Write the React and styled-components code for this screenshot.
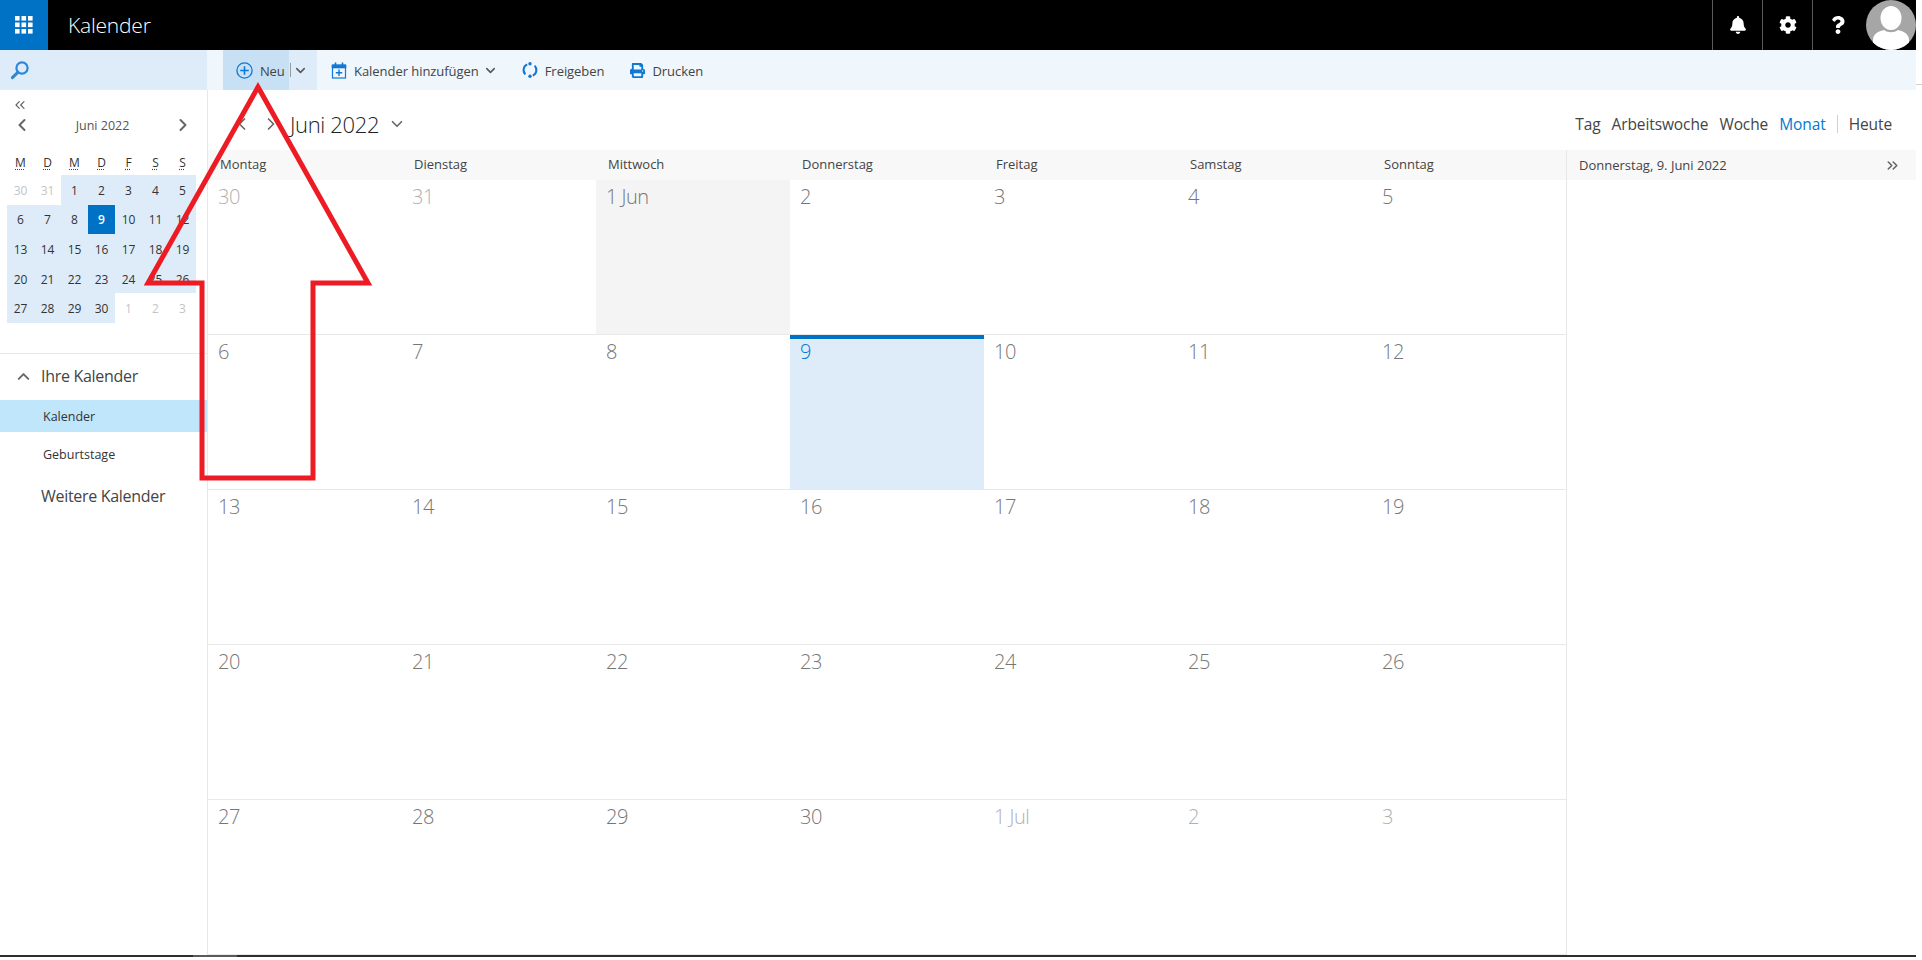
import React from 'react';
import styled, { createGlobalStyle } from 'styled-components';
import { ChevronDown, ChevronLeft, ChevronRight, ChevronUp, ChevronsLeft, ChevronsRight } from 'lucide-react';
import { FaBell, FaCog, FaQuestion, FaPrint } from 'react-icons/fa';

const GlobalStyle = createGlobalStyle`
  html, body {
    margin: 0;
    padding: 0;
    background: #ffffff;
    font-family: "Open Sans", "Noto Sans", sans-serif;
    color: #333333;
  }
  * { box-sizing: border-box; }
`;

const Page = styled.div`
  position: relative;
  width: 1916px;
  height: 957px;
  display: flex;
  flex-direction: column;
`;

const TopBar = styled.header`
  display: flex;
  align-items: stretch;
  height: 50px;
  background: #000000;
  color: #ffffff;
`;

const Waffle = styled.div`
  width: 48px;
  display: flex;
  align-items: center;
  justify-content: center;
  background: #0072c6;
`;

const AppTitle = styled.div`
  flex: 1;
  padding-left: 20px;
  font-size: 21px;
  font-weight: 300;
  line-height: 50px;
  letter-spacing: -0.2px;
`;

const TopIcon = styled.div`
  width: 50px;
  display: flex;
  align-items: center;
  justify-content: center;
  border-left: 1px solid #5a5a5a;
  font-size: 18px;
`;

const Avatar = styled.div`
  width: 50px;
  height: 50px;
  margin-left: 4px;
  border-radius: 50%;
  overflow: hidden;
  background: #a6a6a6;
`;

const Toolbar = styled.div`
  position: relative;
  display: flex;
  height: 40px;
  background: #eff6fc;
  &::after {
    content: '';
    position: absolute;
    left: 100%;
    top: 34px;
    width: 6px;
    height: 1px;
    background: #cfcfcf;
  }
`;

const SearchBox = styled.div`
  width: 207px;
  display: flex;
  align-items: center;
  padding-left: 10px;
  background: #deecf9;
`;

const Actions = styled.div`
  display: flex;
  align-items: stretch;
  margin-left: 16px;
`;

const NewButton = styled.div`
  width: 66px;
  display: flex;
  align-items: center;
  gap: 7px;
  padding: 1px 0 0 13px;
  background: #c7e0f4;
  font-size: 13px;
  letter-spacing: -0.2px;
  color: #444444;
  & > svg { margin-top: -1px; }
`;

const NewMore = styled.div`
  width: 28px;
  display: flex;
  align-items: center;
  justify-content: flex-start;
  padding-left: 1px;
  background: #deecf9;
  color: #555555;
  & > i {
    width: 1px;
    height: 14px;
    margin-right: 2px;
    background: #9a9a9a;
  }
`;

const ActionButton = styled.div`
  display: flex;
  align-items: center;
  gap: 7px;
  padding: 1px ${(p) => p.$right}px 0 14px;
  font-size: 13px;
  letter-spacing: -0.05px;
  color: #444444;
  & > svg { margin-top: -1px; }
`;

const ActionCaret = styled(ChevronDown)`
  margin-left: -3px;
  color: #555555;
`;

const Body = styled.div`
  flex: 1;
  display: flex;
  min-height: 0;
`;

const Sidebar = styled.aside`
  width: 208px;
  border-right: 1px solid #e8e8e8;
  display: flex;
  flex-direction: column;
`;

const CollapseRow = styled.div`
  height: 26px;
  padding: 6px 0 0 12px;
  color: #666666;
`;

const MiniNav = styled.div`
  height: 18px;
  display: flex;
  align-items: center;
  justify-content: space-between;
  padding: 0 14px 0 12px;
  font-size: 12.5px;
  color: #555555;
`;

const NavArrow = styled.span`
  display: flex;
  color: #666666;
`;

const MiniGrid = styled.div`
  display: grid;
  grid-template-columns: repeat(7, 27px);
  margin: 16px 0 0 7px;
`;

const MiniHead = styled.div`
  height: 25px;
  display: flex;
  align-items: center;
  justify-content: center;
  font-size: 12px;
  color: #333333;
  & > abbr {
    text-decoration: underline dotted #444444;
    text-underline-offset: 2px;
  }
`;

const MiniDay = styled.div`
  height: 29.6px;
  padding-top: 1px;
  display: flex;
  align-items: center;
  justify-content: center;
  font-size: 12px;
  color: ${(p) => (p.$today ? '#ffffff' : p.$outside ? '#c4c4c4' : '#333333')};
  font-weight: ${(p) => (p.$today ? 600 : 400)};
  background: ${(p) => (p.$today ? '#0072c6' : p.$outside ? 'transparent' : '#deecf9')};
`;

const SideDivider = styled.hr`
  margin: 30px 0 0;
  border: 0;
  border-top: 1px solid #e8e8e8;
`;

const SectionTitle = styled.div`
  height: ${(p) => p.$height}px;
  display: flex;
  align-items: center;
  gap: 8px;
  padding: 0 0 ${(p) => p.$lift}px ${(p) => p.$indent}px;
  font-size: 16px;
  letter-spacing: -0.3px;
  color: #444444;
`;

const CalendarItem = styled.div`
  height: 32px;
  margin-bottom: ${(p) => p.$gap}px;
  padding: 1px 0 0 43px;
  display: flex;
  align-items: center;
  font-size: 12.5px;
  color: #333333;
  background: ${(p) => (p.$active ? '#c0e6fb' : 'transparent')};
`;

const Main = styled.main`
  flex: 1;
  display: flex;
  flex-direction: column;
  min-width: 0;
`;

const ViewHeader = styled.div`
  height: 60px;
  display: flex;
  align-items: center;
  justify-content: space-between;
  padding: 7px 24px 0 24px;
`;

const MonthPicker = styled.div`
  display: flex;
  align-items: center;
  gap: 9px;
  font-size: 22px;
  font-weight: 300;
  letter-spacing: -0.35px;
  color: #222222;
`;

const ViewSwitch = styled.div`
  display: flex;
  align-items: center;
  gap: 11px;
  font-size: 15.5px;
  letter-spacing: -0.1px;
  color: #444444;
`;

const ViewItem = styled.span`
  color: ${(p) => (p.$active ? '#0078d7' : '#444444')};
`;

const TodayItem = styled.span`
  padding-left: 11px;
  border-left: 1px solid #d0d0d0;
  line-height: 18px;
`;

const CalendarArea = styled.div`
  flex: 1;
  display: flex;
  min-height: 0;
`;

const MonthColumn = styled.div`
  width: 1358px;
  display: flex;
  flex-direction: column;
`;

const WeekHeader = styled.div`
  height: 30px;
  display: grid;
  grid-template-columns: repeat(7, 194px);
  background: #f8f8f8;
`;

const WeekDay = styled.div`
  padding-left: 12px;
  font-size: 13px;
  line-height: 29px;
  color: #444444;
`;

const MonthGrid = styled.div`
  flex: 1;
  display: grid;
  grid-template-columns: repeat(7, 194px);
  grid-auto-rows: 155px;
`;

const DayCell = styled.div`
  padding: 3px 0 0 10px;
  border-bottom: 1px solid #e8e8e8;
  font-size: 20px;
  font-weight: 300;
  line-height: 28px;
  letter-spacing: -0.5px;
  color: ${(p) => (p.$today ? '#0078d7' : p.$outside ? '#b0b0b0' : '#767676')};
  background: ${(p) => (p.$today ? '#deecf9' : p.$first ? '#f4f4f4' : 'transparent')};
  box-shadow: ${(p) => (p.$today ? 'inset 0 4px 0 #0072c6' : 'none')};
`;

const AgendaPanel = styled.div`
  flex: 1;
  border-left: 1px solid #e8e8e8;
`;

const AgendaHead = styled.div`
  height: 30px;
  display: flex;
  align-items: center;
  justify-content: space-between;
  padding: 0 15px 0 12px;
  background: #f8f8f8;
  font-size: 13px;
  color: #444444;
`;

// dark line along the foot of the window, with the lighter thumb near the left
const BottomStrip = styled.div`
  height: 2px;
  display: flex;
  background: #2e2e2a;
`;

const StripThumb = styled.div`
  width: 44px;
  margin-left: 193px;
  background: #5a5a5a;
`;

const ArrowOverlay = styled.svg`
  position: absolute;
  top: 0;
  left: 0;
  pointer-events: none;
`;

const weekNames = ['Montag', 'Dienstag', 'Mittwoch', 'Donnerstag', 'Freitag', 'Samstag', 'Sonntag'];
const miniHeads = ['M', 'D', 'M', 'D', 'F', 'S', 'S'];

// 30, 31 May then June, then 1-3 July
const days = [
  { label: 30, num: 30, outside: true },
  { label: 31, num: 31, outside: true },
];
for (let i = 1; i <= 30; i++) {
  days.push({ label: i === 1 ? '1 Jun' : i, num: i, today: i === 9, first: i === 1 });
}
[1, 2, 3].forEach((n) => days.push({ label: n === 1 ? '1 Jul' : n, num: n, outside: true }));

const WaffleIcon = () => (
  <svg width="18" height="18" viewBox="0 0 18 18" fill="#ffffff">
    {[0, 6.5, 13].map((y) =>
      [0, 6.5, 13].map((x) => <rect key={`${x}-${y}`} x={x} y={y} width="4.6" height="4.6" />)
    )}
  </svg>
);

const SearchIcon = () => (
  <svg width="20" height="20" viewBox="0 0 20 20" fill="none" stroke="#2b88d8">
    <circle cx="12" cy="8" r="5.6" strokeWidth="2.2" />
    <path d="M7.8 12.4 L2.4 17.6" strokeWidth="3" strokeLinecap="round" />
  </svg>
);

const PlusCircle = () => (
  <svg width="17" height="17" viewBox="0 0 17 17" fill="none" stroke="#0f78d4" strokeWidth="1.3">
    <circle cx="8.5" cy="8.5" r="7.6" />
    <path d="M8.5 4.2 V12.8 M4.2 8.5 H12.8" strokeWidth="1.6" />
  </svg>
);

const CalendarAddIcon = () => (
  <svg width="16" height="17" viewBox="0 0 16 17" fill="none" stroke="#0f78d4">
    <rect x="1.5" y="3" width="13" height="13" strokeWidth="1.2" />
    <path d="M1 3.2 H15 V6 H1 Z" fill="#0f78d4" strokeWidth="0.6" />
    <path d="M4.5 0.5 V4 M11.5 0.5 V4" strokeWidth="1.6" />
    <path d="M8 7.6 V14 M4.8 10.8 H11.2" strokeWidth="1.4" />
  </svg>
);

const ShareIcon = () => (
  <svg width="16" height="16" viewBox="0 0 16 16" fill="none" stroke="#0f78d4" strokeWidth="2">
    <path d="M5.2 2.4 A6.2 6.2 0 0 0 3.4 12.4" />
    <path d="M10.8 13.6 A6.2 6.2 0 0 0 12.6 3.6" />
    <circle cx="8" cy="1.8" r="1.7" fill="#0f78d4" stroke="none" />
    <circle cx="8" cy="14.2" r="1.7" fill="#0f78d4" stroke="none" />
  </svg>
);

const AvatarIcon = () => (
  <svg width="50" height="50" viewBox="0 0 50 50" fill="#ffffff">
    <ellipse cx="25" cy="18" rx="10.5" ry="12" />
    <path d="M7 50 V40 C7 33 14 31 18 30 C22 33 28 33 32 30 C36 31 43 33 43 40 V50 Z" />
  </svg>
);

const App = () => {
  return (
    <>
      <GlobalStyle />
      <Page>
        <TopBar>
          <Waffle><WaffleIcon /></Waffle>
          <AppTitle>Kalender</AppTitle>
          <TopIcon><FaBell /></TopIcon>
          <TopIcon><FaCog /></TopIcon>
          <TopIcon><FaQuestion /></TopIcon>
          <Avatar><AvatarIcon /></Avatar>
        </TopBar>

        <Toolbar>
          <SearchBox><SearchIcon /></SearchBox>
          <Actions>
            <NewButton><PlusCircle />Neu</NewButton>
            <NewMore><i /><ChevronDown size={15} strokeWidth={2.4} /></NewMore>
            <ActionButton $right={10}>
              <CalendarAddIcon />
              Kalender hinzufügen
              <ActionCaret size={15} strokeWidth={2.4} />
            </ActionButton>
            <ActionButton $right={12}><ShareIcon />Freigeben</ActionButton>
            <ActionButton $right={10}><FaPrint size={15} color="#0f78d4" />Drucken</ActionButton>
          </Actions>
        </Toolbar>

        <Body>
          <Sidebar>
            <CollapseRow><ChevronsLeft size={16} strokeWidth={1.8} /></CollapseRow>
            <MiniNav>
              <NavArrow><ChevronLeft size={20} strokeWidth={2.4} /></NavArrow>
              Juni 2022
              <NavArrow><ChevronRight size={20} strokeWidth={2.4} /></NavArrow>
            </MiniNav>
            <MiniGrid>
              {miniHeads.map((d, i) => (
                <MiniHead key={i}><abbr>{d}</abbr></MiniHead>
              ))}
              {days.map((d, i) => (
                <MiniDay key={i} $outside={d.outside} $today={d.today}>{d.num}</MiniDay>
              ))}
            </MiniGrid>
            <SideDivider />
            <SectionTitle $height={46} $lift={1} $indent={14}>
              <ChevronUp size={19} strokeWidth={2.4} color="#666666" />
              Ihre Kalender
            </SectionTitle>
            <CalendarItem $active $gap={6}>Kalender</CalendarItem>
            <CalendarItem $gap={0}>Geburtstage</CalendarItem>
            <SectionTitle $height={52} $lift={0} $indent={41}>Weitere Kalender</SectionTitle>
          </Sidebar>

          <Main>
            <ViewHeader>
              <MonthPicker>
                <NavArrow><ChevronLeft size={20} strokeWidth={2} /></NavArrow>
                <NavArrow><ChevronRight size={20} strokeWidth={2} /></NavArrow>
                Juni 2022
                <NavArrow><ChevronDown size={18} strokeWidth={2.2} /></NavArrow>
              </MonthPicker>
              <ViewSwitch>
                <ViewItem>Tag</ViewItem>
                <ViewItem>Arbeitswoche</ViewItem>
                <ViewItem>Woche</ViewItem>
                <ViewItem $active>Monat</ViewItem>
                <TodayItem>Heute</TodayItem>
              </ViewSwitch>
            </ViewHeader>

            <CalendarArea>
              <MonthColumn>
                <WeekHeader>
                  {weekNames.map((n) => <WeekDay key={n}>{n}</WeekDay>)}
                </WeekHeader>
                <MonthGrid>
                  {days.map((d, i) => (
                    <DayCell key={i} $outside={d.outside} $today={d.today} $first={d.first}>{d.label}</DayCell>
                  ))}
                </MonthGrid>
              </MonthColumn>
              <AgendaPanel>
                <AgendaHead>
                  Donnerstag, 9. Juni 2022
                  <ChevronsRight size={17} strokeWidth={2.2} color="#666666" />
                </AgendaHead>
              </AgendaPanel>
            </CalendarArea>
          </Main>
        </Body>

        <BottomStrip><StripThumb /></BottomStrip>

        <ArrowOverlay width="1916" height="955" fill="none">
          <polygon
            points="258,87 368,283 313,283 313,478 202,478 202,283 148,283"
            stroke="#ed1c24"
            strokeWidth="5"
            strokeLinejoin="miter"
          />
        </ArrowOverlay>
      </Page>
    </>
  );
};

export default App;
